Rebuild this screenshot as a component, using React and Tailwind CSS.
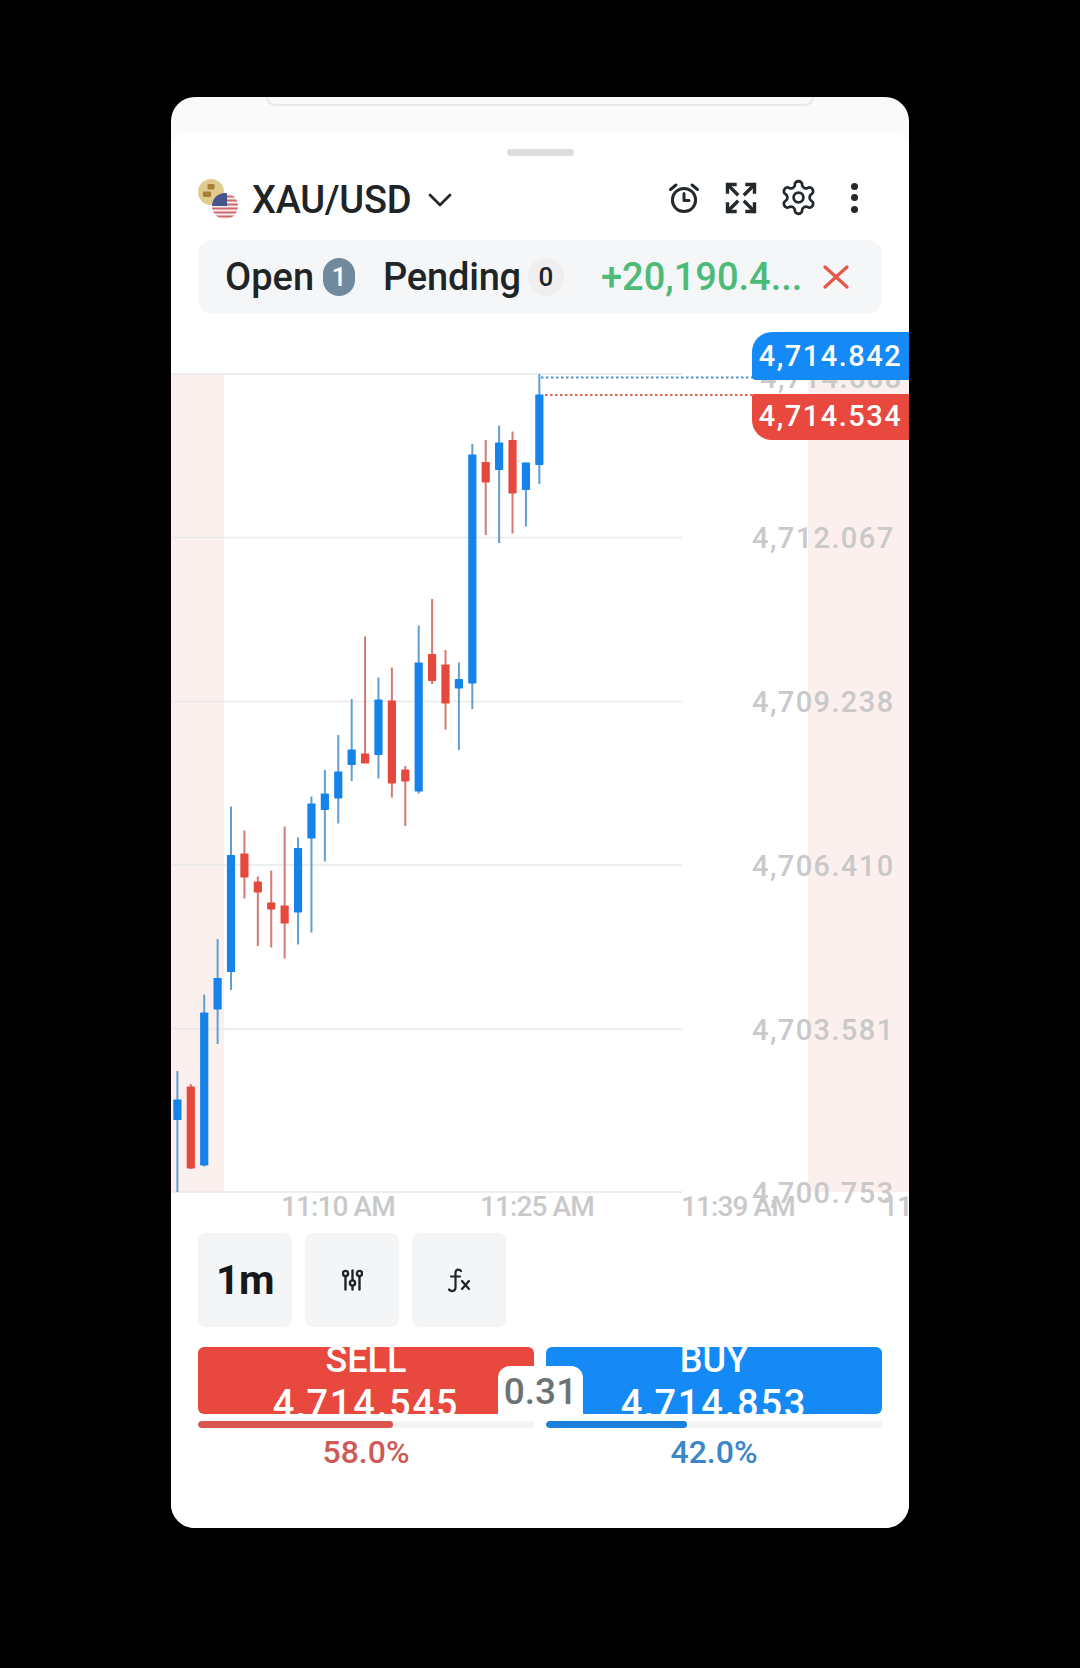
const candles = [
  ["b",1071,1192,1099.5,1120],
  ["r",1084,1169,1086.5,1168.5],
  ["b",994.5,1166.5,1012.5,1165.5],
  ["b",939,1044,978,1009.5],
  ["b",806.5,990,855,972],
  ["r",830.5,898.5,853.5,877.5],
  ["r",876.5,946,881.5,892.5],
  ["r",870.5,947.5,902.5,909.5],
  ["r",826.5,958.5,905.5,923.5],
  ["b",837.5,944.5,848,912.5],
  ["b",796.5,932.5,803.5,838.5],
  ["b",770,861.5,793.5,810],
  ["b",735,823.5,771.5,798.5],
  ["b",699,781,749.5,765],
  ["r",636.5,763,753.5,763.5],
  ["b",677.5,778.5,699.5,755],
  ["r",667.5,797.5,700.5,783.5],
  ["r",766,826,769.5,781.5],
  ["b",625.5,793.5,662.5,791.5],
  ["r",599,684,654,681],
  ["r",650,729.5,664.5,703.5],
  ["b",662.5,750,679,688.5],
  ["b",444,709,454.5,683.5],
  ["r",440,535,462,482.5],
  ["b",425.5,543,442.5,470],
  ["r",431.5,533.5,440,493.5],
  ["b",462.5,526.5,462.5,490],
  ["b",374,484,394.5,465],
];

const prices = [
  ["4,712.067", 213],
  ["4,709.238", 377],
  ["4,706.410", 541],
  ["4,703.581", 705],
  ["4,700.753", 868],
];

const times = [
  ["11:10 AM", 110],
  ["11:25 AM", 309],
  ["11:39 AM", 510],
  ["11", 711],
];

function Chart() {
  return (
    <svg className="absolute inset-0" width="738" height="900" viewBox="171 325 738 900">
      <rect x="171" y="374" width="53" height="818" fill="#fbf0ee" />
      <rect x="808" y="374" width="101" height="818" fill="#fbf0ee" />
      {[374, 537.5, 701.5, 865, 1029, 1192].map((y) => (
        <line key={y} x1="171" x2="682" y1={y} y2={y} stroke="#e9e9ea" strokeWidth="1.6" />
      ))}
      {candles.map(([c, wt, wb, bt, bb], i) => {
        const x = 177.4 + i * 13.405;
        return (
          <g key={i}>
            <line x1={x} x2={x} y1={wt} y2={wb} stroke={c === "b" ? "#5f9fd4" : "#d47a72"} strokeWidth="2" />
            <rect x={x - 4.1} y={bt} width="8.2" height={bb - bt} rx="0.8" fill={c === "b" ? "#1583ea" : "#e5493e"} />
          </g>
        );
      })}
      <line x1="541" x2="753" y1="377.5" y2="377.5" stroke="#4f93cf" strokeWidth="1.8" strokeDasharray="2.5 2.5" />
      <line x1="545" x2="753" y1="395" y2="395" stroke="#d9655c" strokeWidth="1.8" strokeDasharray="2.5 2.5" />
    </svg>
  );
}

function Flags() {
  return (
    <svg width="42" height="42" viewBox="0 0 42 42" className="shrink-0">
      <defs>
        <clipPath id="flagClip"><circle cx="27" cy="27" r="13" /></clipPath>
      </defs>
      <circle cx="13" cy="13" r="13" fill="#e0ca8e" />
      <rect x="9.5" y="5" width="7" height="5.5" rx="1" fill="#a87f35" />
      <rect x="5" y="12.5" width="8" height="5.5" rx="1" fill="#a87f35" />
      <g clipPath="url(#flagClip)">
        <rect x="14" y="14" width="26" height="26" fill="#f6eeee" />
        {[16.5, 20.5, 24.5, 28.5, 32.5, 36.5].map((y) => (
          <rect key={y} x="14" y={y} width="26" height="2" fill="#cf6a70" />
        ))}
        <rect x="14" y="14" width="15" height="13" fill="#46568c" />
      </g>
    </svg>
  );
}

function AlarmIcon() {
  return (
    <svg width="32" height="32" viewBox="0 0 32 32" fill="none" stroke="#24292d" strokeWidth="3" strokeLinecap="round" strokeLinejoin="round">
      <circle cx="16" cy="18" r="11.6" />
      <path d="M16 11.5V18.5H21" />
      <path d="M2.5 7.5L8 3" />
      <path d="M29.5 7.5L24 3" />
    </svg>
  );
}

function ExpandIcon() {
  return (
    <svg width="32" height="32" viewBox="0 0 32 32" fill="none" stroke="#24292d" strokeWidth="3.4" strokeLinecap="square" strokeLinejoin="miter">
      <path d="M2.5 10V2.5H10" />
      <path d="M3 3L12 12" />
      <path d="M22 2.5H29.5V10" />
      <path d="M29 3L20 12" />
      <path d="M2.5 22V29.5H10" />
      <path d="M3 29L12 20" />
      <path d="M22 29.5H29.5V22" />
      <path d="M29 29L20 20" />
    </svg>
  );
}

function GearIcon() {
  return (
    <svg width="39" height="39" viewBox="0 0 24 24" fill="none" stroke="#24292d" strokeWidth="1.7" strokeLinecap="round" strokeLinejoin="round">
      <path d="M12.22 2h-.44a2 2 0 0 0-2 2v.18a2 2 0 0 1-1 1.73l-.43.25a2 2 0 0 1-2 0l-.15-.08a2 2 0 0 0-2.73.73l-.22.38a2 2 0 0 0 .73 2.73l.15.1a2 2 0 0 1 1 1.72v.51a2 2 0 0 1-1 1.74l-.15.09a2 2 0 0 0-.73 2.73l.22.38a2 2 0 0 0 2.73.73l.15-.08a2 2 0 0 1 2 0l.43.25a2 2 0 0 1 1 1.73V20a2 2 0 0 0 2 2h.44a2 2 0 0 0 2-2v-.18a2 2 0 0 1 1-1.73l.43-.25a2 2 0 0 1 2 0l.15.08a2 2 0 0 0 2.73-.73l.22-.39a2 2 0 0 0-.73-2.73l-.15-.08a2 2 0 0 1-1-1.74v-.5a2 2 0 0 1 1-1.74l.15-.09a2 2 0 0 0 .73-2.73l-.22-.38a2 2 0 0 0-2.73-.73l-.15.08a2 2 0 0 1-2 0l-.43-.25a2 2 0 0 1-1-1.73V4a2 2 0 0 0-2-2z" />
      <circle cx="12" cy="12" r="3" />
    </svg>
  );
}

function SlidersIcon() {
  return (
    <svg width="21" height="22" viewBox="0 0 21 22" fill="none" stroke="#1f2427" strokeWidth="2.4" strokeLinecap="round">
      <path d="M3.5 7.5V20.5" />
      <circle cx="3.5" cy="4.5" r="2.6" />
      <path d="M10.5 1.5V11" />
      <circle cx="10.5" cy="14" r="2.6" />
      <path d="M10.5 17V20.5" />
      <path d="M17.5 7.5V20.5" />
      <circle cx="17.5" cy="4.5" r="2.6" />
    </svg>
  );
}

function FxIcon() {
  return (
    <svg width="24" height="25" viewBox="0 0 24 25" fill="none" stroke="#1f2427" strokeWidth="2.2" strokeLinecap="round">
      <path d="M14 3C12 0.8 8.5 1 8.5 4.8V19.5C8.5 23.5 4 24 2 21.5" />
      <path d="M4 8.5H13" />
      <path d="M15 13L22 21" />
      <path d="M22 13L15 21" />
    </svg>
  );
}

function Tile({ children }) {
  return (
    <div className="flex h-[94px] w-[94px] items-center justify-center rounded-lg bg-[#f4f5f6]">{children}</div>
  );
}

function TradeButton({ bg, label, price }) {
  return (
    <div className={`flex h-[67px] w-[336px] flex-col items-center overflow-hidden rounded-[6px] ${bg}`}>
      <div className="mt-[-7px] text-[36px] font-medium leading-[40px] text-white">{label}</div>
      <div className="mt-[3px] text-[38px] font-medium leading-[42px] tracking-[1.8px] text-white">{price}</div>
    </div>
  );
}

export default function App() {
  return (
    <div className="min-h-[1668px] w-full bg-black pt-[97px] font-['Roboto',sans-serif]">
      <div className="ml-[171px] h-[1431px] w-[738px] overflow-hidden rounded-[24px] bg-[#fafafa]">
        <div className="mx-[95px] h-[9px] rounded-b-[24px] border-b-2 border-x-2 border-[#e8e8e8]" />
        <div className="mt-[26px] h-[1396px] rounded-t-[14px] bg-white">
          <div className="mx-auto h-[7px] w-[67px] translate-y-[17px] rounded-full bg-[#dedede]" />
          <div className="relative flex h-[101px] items-start pl-[27px] pr-[51px] pt-[40px]">
            <Flags />
            <span className="ml-[12px] text-[38px] font-medium leading-[42px] tracking-[-0.3px] text-[#1f2427]">XAU/USD</span>
            <svg width="24" height="16" viewBox="0 0 24 16" fill="none" stroke="#24292d" strokeWidth="2.8" strokeLinecap="round" strokeLinejoin="round" className="ml-[17px] mt-[13px]">
              <path d="M2 3L12 13L22 3" />
            </svg>
            <div className="ml-auto mt-[-1px] flex items-center">
              <AlarmIcon />
              <div className="ml-[25px]"><ExpandIcon /></div>
              <div className="ml-[22px]"><GearIcon /></div>
              <div className="ml-[33px] flex flex-col gap-[4.5px]">
                <span className="h-[7px] w-[7px] rounded-full bg-[#24292d]" />
                <span className="h-[7px] w-[7px] rounded-full bg-[#24292d]" />
                <span className="h-[7px] w-[7px] rounded-full bg-[#24292d]" />
              </div>
            </div>
          </div>
          <div className="mx-[27px] flex h-[74px] items-center rounded-[14px] bg-[#f5f6f7] pl-[27px] pr-[33px]">
            <span className="text-[38px] font-medium text-[#1f2427]">Open</span>
            <span className="ml-[9px] flex h-[38px] w-[32px] items-center justify-center rounded-full bg-[#6f8a9f] text-[26px] font-medium text-white">1</span>
            <span className="ml-[28px] text-[38px] font-medium tracking-[-0.2px] text-[#1f2427]">Pending</span>
            <span className="ml-[7px] flex h-[38px] w-[36px] items-center justify-center rounded-full bg-[#efefef] text-[26px] font-medium text-[#1f2427]">0</span>
            <span className="ml-[37px] text-[38px] font-medium text-[#4cbb78]">+20,190.4...</span>
            <svg width="26" height="24" viewBox="0 0 26 24" fill="none" stroke="#e8574a" strokeWidth="3.2" strokeLinecap="round" className="ml-auto">
              <path d="M2 2L24 22" />
              <path d="M24 2L2 22" />
            </svg>
          </div>
          <div className="relative mt-[11px] h-[900px] w-[738px] overflow-hidden">
            <Chart />
            {prices.map(([p, top]) => (
              <span key={p} className="absolute left-[581px] text-[29px] font-medium leading-[32px] tracking-[1.4px] text-[#c9c9c9]" style={{ top: top - 16 }}>{p}</span>
            ))}
            {times.map(([t, left]) => (
              <span key={t} className="absolute top-[866px] whitespace-nowrap text-[28px] font-medium leading-[32px] tracking-[-0.9px] text-[#c9c9c9]" style={{ left }}>{t}</span>
            ))}
            <span className="absolute left-[589px] top-[37px] text-[29px] font-medium leading-[32px] tracking-[1.4px] text-[#c9c9c9]">4,714.688</span>
            <div className="absolute left-[581px] top-[7px] flex h-[48px] w-[157px] items-center justify-center rounded-tl-[20px] rounded-bl-[4px] bg-[#1589f5] pt-[2px] text-[29px] font-medium tracking-[1.5px] text-white">4,714.842</div>
            <div className="absolute left-[581px] top-[69px] flex h-[46px] w-[157px] items-center justify-center rounded-bl-[20px] rounded-tl-[2px] bg-[#e8483d] text-[29px] font-medium tracking-[1.5px] text-white">4,714.534</div>
          </div>
          <div className="ml-[27px] mt-[8px] flex gap-[13px]">
            <Tile><span className="text-[41px] font-bold leading-none tracking-[-0.5px] text-[#15191c]">1m</span></Tile>
            <Tile><SlidersIcon /></Tile>
            <Tile><FxIcon /></Tile>
          </div>
          <div className="relative mx-[27px] mt-[20px] flex justify-between">
            <TradeButton bg="bg-[#e8483d]" label="SELL" price="4,714.545" />
            <TradeButton bg="bg-[#1589f5]" label="BUY" price="4,714.853" />
            <div className="absolute left-[300px] top-[19px] flex h-[48px] w-[85px] items-start justify-center rounded-t-[12px] bg-white pt-[5px] text-[37px] font-medium leading-[42px] text-[#6d7275]">0.31</div>
          </div>
          <div className="mx-[27px] mt-[7px] flex justify-between">
            <div className="w-[336px]">
              <div className="h-[7px] overflow-hidden rounded-full bg-[#f4f4f4]">
                <div className="h-full w-[195px] rounded-full bg-[#d9534f]" />
              </div>
              <div className="mt-[8px] text-center text-[32px] font-medium leading-[32px] text-[#cf5a55]">58.0%</div>
            </div>
            <div className="w-[336px]">
              <div className="h-[7px] overflow-hidden rounded-full bg-[#f4f4f4]">
                <div className="h-full w-[141px] rounded-full bg-[#1a80d9]" />
              </div>
              <div className="mt-[8px] text-center text-[32px] font-medium leading-[32px] text-[#3a86c8]">42.0%</div>
            </div>
          </div>
        </div>
      </div>
    </div>
  );
}
